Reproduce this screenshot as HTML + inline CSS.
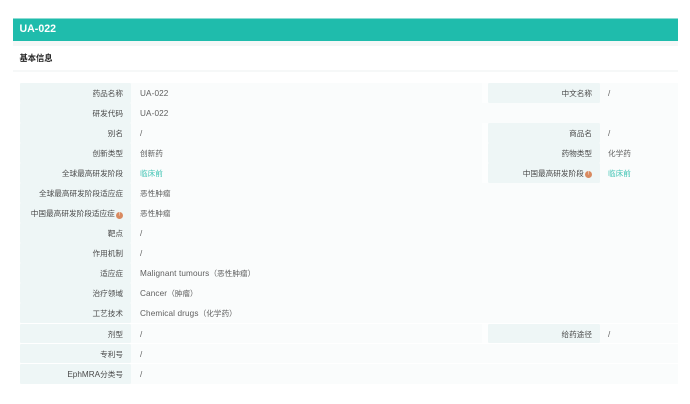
<!DOCTYPE html>
<html lang="zh">
<head>
<meta charset="utf-8">
<title>UA-022</title>
<style>
html,body{margin:0;padding:0;background:#fff;}
body{width:690px;height:404px;overflow:hidden;position:relative;font-family:"Liberation Sans","Noto Sans CJK SC",sans-serif;}
#wrap{position:absolute;left:0;top:0;width:690px;height:404px;filter:blur(0.35px);}
.b{position:absolute;}
.bar{left:13px;top:17.5px;width:665px;height:23px;background:#1fbcac;border-top:0.5px solid #8fdcd3;box-sizing:border-box;}
.title{position:absolute;left:19.5px;top:19.5px;height:17px;line-height:19px;font-size:10.6px;font-weight:bold;color:#fff;}
.sec{position:absolute;left:19.5px;top:52px;line-height:14px;font-size:8.25px;font-weight:bold;color:#222;}
.row{position:absolute;left:19.5px;width:658px;height:19.5px;background:#fafcfc;}
.lab{position:absolute;width:111.5px;height:19.5px;background:#eef6f6;border-radius:1.5px;box-sizing:border-box;text-align:right;padding-right:8px;font-size:7.65px;line-height:21px;color:#4a4a4a;white-space:nowrap;}
.val{position:absolute;height:19.5px;font-size:7.65px;line-height:21px;color:#5e5e5e;white-space:nowrap;}
.en{font-size:8.2px;letter-spacing:.12px;}
.g{color:#43c4b5;}
.gap{position:absolute;left:482px;width:6px;height:19.5px;background:#fdfefe;}
.i{display:inline-block;width:7px;height:7px;border-radius:50%;background:#d98a60;color:#fff;font-size:5px;line-height:7px;text-align:center;margin-left:1.2px;vertical-align:0.8px;font-style:italic;}
</style>
</head>
<body>
<div id="wrap">
<div class="b bar"></div>
<div class="title">UA-022</div>
<div class="b" style="left:13px;top:40.5px;width:665px;height:5.5px;background:#f5f7f7;"></div>
<div class="sec">基本信息</div>
<div class="b" style="left:13px;top:70px;width:665px;height:2px;background:#f6f8f8;"></div>

<div class="row" style="top:83px"></div>
<div class="row" style="top:103px"></div>
<div class="row" style="top:123px"></div>
<div class="row" style="top:143.2px"></div>
<div class="row" style="top:163.2px"></div>
<div class="row" style="top:183.4px"></div>
<div class="row" style="top:203.4px"></div>
<div class="row" style="top:223.4px"></div>
<div class="row" style="top:243.4px"></div>
<div class="row" style="top:263.4px"></div>
<div class="row" style="top:283.4px"></div>
<div class="row" style="top:303.4px"></div>
<div class="row" style="top:323.5px"></div>
<div class="row" style="top:343.5px"></div>
<div class="row" style="top:364px"></div>

<div class="gap" style="top:83px"></div>
<div class="gap" style="top:123px"></div>
<div class="gap" style="top:143.2px"></div>
<div class="gap" style="top:163.2px"></div>
<div class="gap" style="top:323.5px"></div>

<div class="lab" style="left:19.5px;top:83px">药品名称</div><div class="val en" style="left:140px;top:83px">UA-022</div>
<div class="lab" style="left:19.5px;top:103px">研发代码</div><div class="val en" style="left:140px;top:103px">UA-022</div>
<div class="lab" style="left:19.5px;top:123px">别名</div><div class="val en" style="left:140px;top:123px">/</div>
<div class="lab" style="left:19.5px;top:143.2px">创新类型</div><div class="val" style="left:140px;top:143.2px">创新药</div>
<div class="lab" style="left:19.5px;top:163.2px">全球最高研发阶段</div><div class="val g" style="left:140px;top:163.2px">临床前</div>
<div class="lab" style="left:19.5px;top:183.4px">全球最高研发阶段适应症</div><div class="val" style="left:140px;top:183.4px">恶性肿瘤</div>
<div class="lab" style="left:19.5px;top:203.4px">中国最高研发阶段适应症<span class="i">!</span></div><div class="val" style="left:140px;top:203.4px">恶性肿瘤</div>
<div class="lab" style="left:19.5px;top:223.4px">靶点</div><div class="val en" style="left:140px;top:223.4px">/</div>
<div class="lab" style="left:19.5px;top:243.4px">作用机制</div><div class="val en" style="left:140px;top:243.4px">/</div>
<div class="lab" style="left:19.5px;top:263.4px">适应症</div><div class="val en" style="left:140px;top:263.4px">Malignant tumours<span style="font-size:7.65px;letter-spacing:0">（恶性肿瘤）</span></div>
<div class="lab" style="left:19.5px;top:283.4px">治疗领域</div><div class="val en" style="left:140px;top:283.4px">Cancer<span style="font-size:7.65px;letter-spacing:0">（肿瘤）</span></div>
<div class="lab" style="left:19.5px;top:303.4px">工艺技术</div><div class="val en" style="left:140px;top:303.4px">Chemical drugs<span style="font-size:7.65px;letter-spacing:0">（化学药）</span></div>
<div class="lab" style="left:19.5px;top:323.5px">剂型</div><div class="val en" style="left:140px;top:323.5px">/</div>
<div class="lab" style="left:19.5px;top:343.5px">专利号</div><div class="val en" style="left:140px;top:343.5px">/</div>
<div class="lab" style="left:19.5px;top:364px"><span style="font-size:8.2px">EphMRA</span>分类号</div><div class="val en" style="left:140px;top:364px">/</div>

<div class="lab" style="left:488px;top:83px;width:112px">中文名称</div><div class="val en" style="left:608px;top:83px">/</div>
<div class="lab" style="left:488px;top:123px;width:112px">商品名</div><div class="val en" style="left:608px;top:123px">/</div>
<div class="lab" style="left:488px;top:143.2px;width:112px">药物类型</div><div class="val" style="left:608px;top:143.2px">化学药</div>
<div class="lab" style="left:488px;top:163.2px;width:112px">中国最高研发阶段<span class="i">!</span></div><div class="val g" style="left:608px;top:163.2px">临床前</div>
<div class="lab" style="left:488px;top:323.5px;width:112px">给药途径</div><div class="val en" style="left:608px;top:323.5px">/</div>
</div>
</body>
</html>
